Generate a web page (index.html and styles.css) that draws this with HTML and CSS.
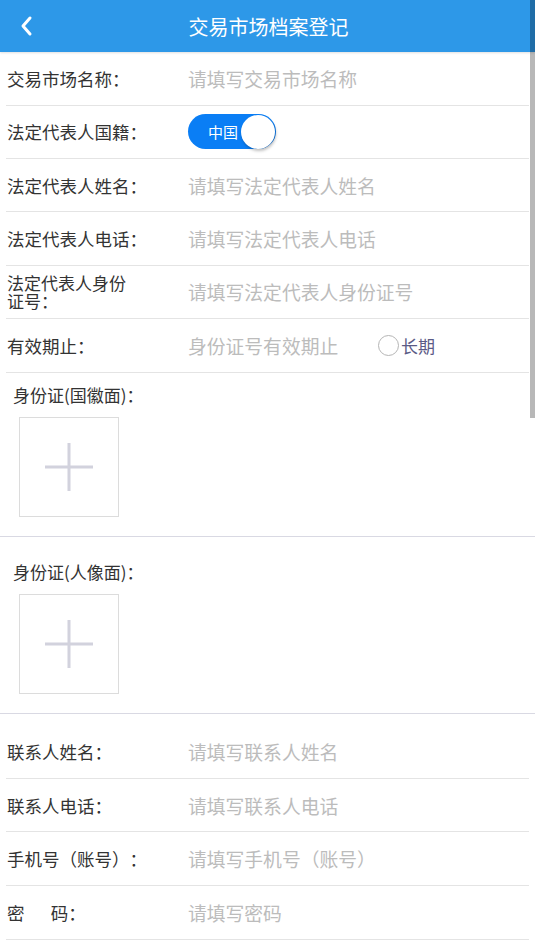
FILE: index.html
```html
<!DOCTYPE html>
<html lang="zh-CN">
<head>
<meta charset="utf-8">
<title>交易市场档案登记</title>
<link rel="stylesheet" href="styles.css">
</head>
<body>
<header class="bar">
  <svg class="back" width="16" height="22" viewBox="0 0 16 22"><path d="M12 3 L5 11 L12 19" fill="none" stroke="#fff" stroke-width="3" stroke-linecap="round" stroke-linejoin="round"/></svg>
  <h1 class="title">交易市场档案登记</h1>
</header>
<main class="form">
  <div class="row"><span class="label">交易市场名称：</span><span class="ph">请填写交易市场名称</span></div>
  <div class="row"><span class="label">法定代表人国籍：</span><span class="switch"><span class="switch-text">中国</span><span class="knob"></span></span></div>
  <div class="row"><span class="label">法定代表人姓名：</span><span class="ph">请填写法定代表人姓名</span></div>
  <div class="row"><span class="label">法定代表人电话：</span><span class="ph">请填写法定代表人电话</span></div>
  <div class="row"><span class="label label-wrap">法定代表人身份<br>证号：</span><span class="ph">请填写法定代表人身份证号</span></div>
  <div class="row"><span class="label">有效期止：</span><span class="ph ph-date">身份证号有效期止</span><span class="radio"><span class="radio-dot"></span><span class="radio-text">长期</span></span></div>
  <section class="upload upload-first">
    <div class="upload-label">身份证(国徽面)：</div>
    <div class="upload-box"><svg width="50" height="50" viewBox="0 0 50 50"><path d="M25 1 V49 M1 25 H49" stroke="#d2d2dd" stroke-width="3"/></svg></div>
  </section>
  <section class="upload upload-second">
    <div class="upload-label">身份证(人像面)：</div>
    <div class="upload-box"><svg width="50" height="50" viewBox="0 0 50 50"><path d="M25 1 V49 M1 25 H49" stroke="#d2d2dd" stroke-width="3"/></svg></div>
  </section>
  <div class="row row-low row-gap"><span class="label">联系人姓名：</span><span class="ph">请填写联系人姓名</span></div>
  <div class="row row-low"><span class="label">联系人电话：</span><span class="ph">请填写联系人电话</span></div>
  <div class="row row-low"><span class="label">手机号（账号）：</span><span class="ph">请填写手机号（账号）</span></div>
  <div class="row row-low"><span class="label">密&emsp;&ensp;码：</span><span class="ph">请填写密码</span></div>
</main>
<div class="scrollbar"></div>
</body>
</html>
```
FILE: styles.css
```css
html, body {
  margin: 0;
  padding: 0;
  background: #fff;
  font-family: "Noto Sans CJK SC", "Noto Sans", sans-serif;
  color: #333;
  overflow: hidden;
  text-spacing-trim: space-all;
}
.bar {
  height: 52px;
  background: #2d98e8;
  display: flex;
  align-items: center;
  justify-content: center;
  position: relative;
  box-shadow: 0 1px 2px rgba(0,0,0,0.12);
}
.back {
  position: absolute;
  left: 18px;
  top: 15px;
}
.title {
  margin: 0;
  font-size: 20px;
  font-weight: normal;
  color: #fff;
  padding-left: 2px;
}
.form {
  padding: 0 6px;
}
.row {
  height: 52.4px;
  border-bottom: 1px solid #e4e4e4;
  display: flex;
  align-items: center;
}
.row:first-child {
  height: 52.6px;
}
.row-low {
  height: 52.7px;
}
.row-gap {
  margin-top: 11px;
}
.label {
  width: 181px;
  flex: none;
  padding-left: 1px;
  font-size: 17.5px;
  white-space: nowrap;
  color: #333;
}
.label-wrap {
  font-size: 17px;
  line-height: 18.5px;
  padding-top: 1px;
}
.ph {
  font-size: 18.8px;
  color: #bcbcbc;
  white-space: nowrap;
}
.ph-date {
  width: 190px;
}
.switch {
  width: 88px;
  height: 35px;
  border-radius: 18px;
  background: #0a7ef5;
  display: flex;
  align-items: center;
  justify-content: space-between;
  box-sizing: border-box;
  padding: 0 1px 0 20px;
}
.switch-text {
  color: #fff;
  font-size: 15px;
}
.knob {
  width: 34px;
  height: 34px;
  border-radius: 50%;
  background: #fff;
  box-shadow: 1px 2px 3px rgba(0,0,0,0.25);
}
.radio {
  display: flex;
  align-items: center;
  gap: 2px;
}
.radio-dot {
  width: 19px;
  height: 19px;
  border: 1px solid #b5b5b5;
  border-radius: 50%;
}
.radio-text {
  font-size: 17px;
  color: #5b5b86;
}
.upload {
  margin: 0 -6px;
  padding: 0 0 19px 13px;
  border-bottom: 1px solid #d9d9e3;
}
.upload-first {
  padding-top: 10.5px;
}
.upload-second {
  padding-top: 23px;
}
.upload-label {
  font-size: 17px;
  line-height: 24px;
  color: #333;
}
.upload-box {
  margin: 10px 0 0 6px;
  width: 98px;
  height: 98px;
  border: 1px solid #dcdcdc;
  display: flex;
  align-items: center;
  justify-content: center;
}
.scrollbar {
  position: absolute;
  top: 0;
  right: 0;
  width: 5px;
  height: 418px;
  background: rgba(0,0,0,0.28);
}
```
